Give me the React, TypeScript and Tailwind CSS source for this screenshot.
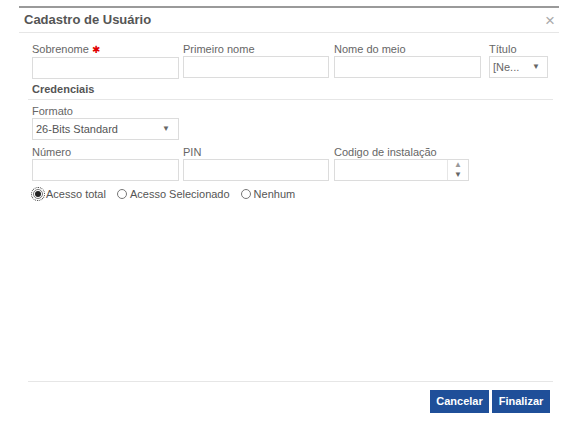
import React from "react";

const font = { fontFamily: '"Liberation Sans", Arial, sans-serif' };

function Label({ children }: { children: React.ReactNode }) {
  return <div className="block text-[11px] leading-[14px] text-[#666] whitespace-nowrap">{children}</div>;
}

function Input({ w }: { w: string }) {
  return <div className={`${w} h-[22px] border border-[#dcdcdc] bg-white`} />;
}

function Arrow() {
  return <span className="text-[8px] text-[#666] leading-none">▼</span>;
}

function Radio({ checked, label }: { checked?: boolean; label: string }) {
  return (
    <label className="flex items-center gap-[3px] text-[11px] text-[#555] leading-[14px]">
      <span
        className={`relative flex items-center justify-center w-[10px] h-[10px] rounded-full border border-[#777] bg-white ${
          checked ? "outline outline-1 outline-dotted outline-[#333] outline-offset-[1px]" : ""
        }`}
      >
        {checked && <span className="w-[6px] h-[6px] rounded-full bg-[#222]" />}
      </span>
      {label}
    </label>
  );
}

export default function App() {
  return (
    <div className="w-[579px] h-[437px] bg-white overflow-hidden" style={font}>
      <div className="mt-[6px] ml-[19px] w-[540px] h-[419px] flex flex-col border-t-2 border-[#9a9a9a]">
        {/* header */}
        <div className="h-[25px] flex items-center justify-between pl-[5px] pr-[4px] border-b border-[#e6e6e6]">
          <span className="text-[13px] font-bold text-[#555]">Cadastro de Usuário</span>
          <span className="text-[17px] text-[#aaa] leading-none">×</span>
        </div>

        {/* body */}
        <div className="flex-1 pl-[13px] pr-[11px] pt-[9px]">
          <div className="flex">
            <div className="w-[151px]">
              <Label>
                Sobrenome <span className="text-[#e00000] text-[10px]">✱</span>
              </Label>
              <Input w="w-[147px]" />
            </div>
            <div className="w-[151px]">
              <Label>Primeiro nome</Label>
              <Input w="w-[146px]" />
            </div>
            <div className="w-[155px]">
              <Label>Nome do meio</Label>
              <Input w="w-[147px]" />
            </div>
            <div className="w-[59px]">
              <Label>Título</Label>
              <div className="w-[59px] h-[22px] border border-[#dcdcdc] flex items-center justify-between pl-[3px] pr-[7px] text-[11px] text-[#666]">
                <span>[Ne...</span>
                <Arrow />
              </div>
            </div>
          </div>

          <div className="-ml-[4px] -mr-[5px] pl-[4px] mt-[3px] pb-[3px] border-b border-[#e6e6e6] text-[11px] leading-[14px] font-bold text-[#555]">
            Credenciais
          </div>

          <div className="mt-[4px]">
            <Label>Formato</Label>
            <div className="w-[147px] h-[22px] border border-[#dcdcdc] flex items-center justify-between pl-[3px] pr-[8px] text-[11px] text-[#555]">
              <span>26-Bits Standard</span>
              <Arrow />
            </div>
          </div>

          <div className="flex mt-[5px]">
            <div className="w-[151px]">
              <Label>Número</Label>
              <Input w="w-[147px]" />
            </div>
            <div className="w-[151px]">
              <Label>PIN</Label>
              <Input w="w-[146px]" />
            </div>
            <div className="w-[155px]">
              <Label>Codigo de instalação</Label>
              <div className="w-[135px] h-[22px] border border-[#dcdcdc] flex">
                <div className="flex-1" />
                <div className="w-[21px] border-l border-[#e6e6e6] flex flex-col items-center justify-center gap-[2px]">
                  <span className="text-[8px] leading-none text-[#999]">▲</span>
                  <span className="text-[8px] leading-none text-[#666]">▼</span>
                </div>
              </div>
            </div>
          </div>

          <div className="flex items-center mt-[6px] ml-[1px] gap-[11px]">
            <Radio checked label="Acesso total" />
            <Radio label="Acesso Selecionado" />
            <Radio label="Nenhum" />
          </div>
        </div>

        {/* footer */}
        <div className="ml-[9px] mr-[6px] border-t border-[#e6e6e6] pt-[8px] pb-[12px] pr-[3px] flex justify-end gap-[3px]">
          <button className="h-[23px] w-[59px] bg-[#1f4f99] text-white text-[11px] font-bold">Cancelar</button>
          <button className="h-[23px] w-[58px] bg-[#1f4f99] text-white text-[11px] font-bold">Finalizar</button>
        </div>
      </div>
    </div>
  );
}
